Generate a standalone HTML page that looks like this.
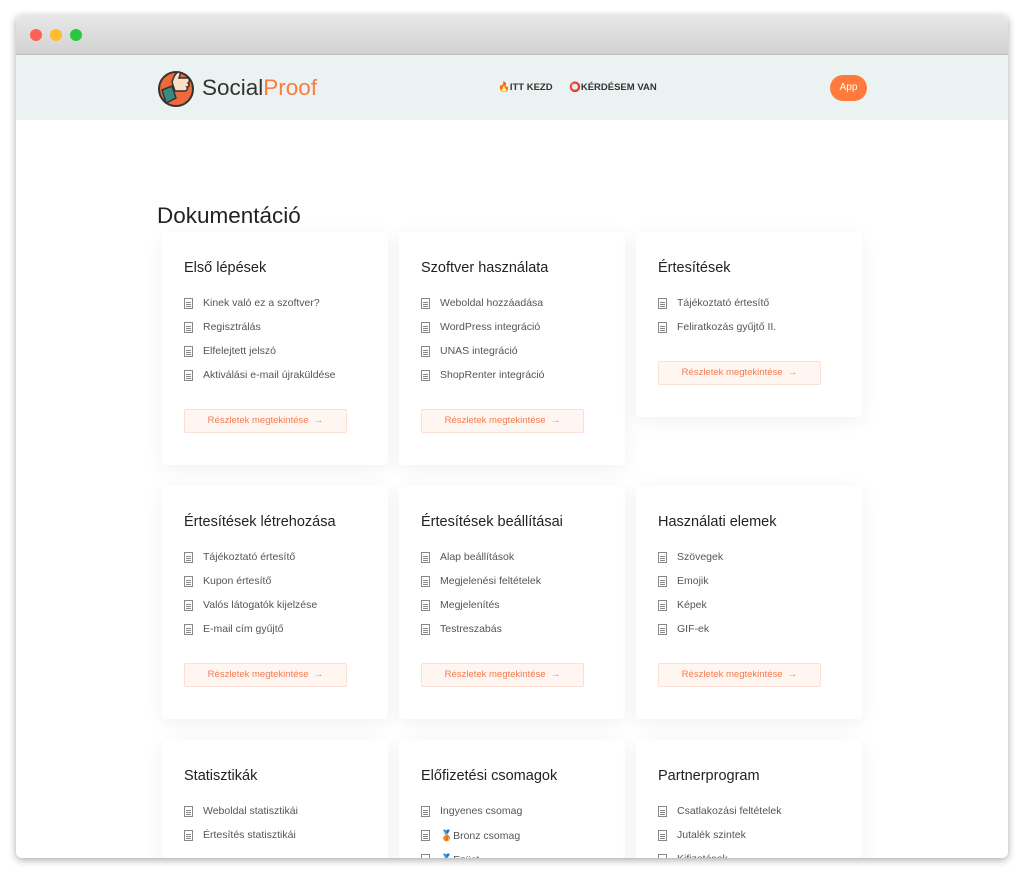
<!DOCTYPE html><html><head><meta charset="utf-8"><style>
*{box-sizing:border-box;margin:0;padding:0}
html,body{width:1024px;height:875px;overflow:hidden}
body{background:#fff;font-family:"Liberation Sans",sans-serif;position:relative}
.win{position:absolute;left:16px;top:15px;width:992px;height:843px;border-radius:6px;overflow:hidden;box-shadow:0 2px 8px rgba(0,0,0,.35);background:#fff}
.tb{height:40px;background:linear-gradient(#e8e8e8,#d2d2d2);border-bottom:1px solid #bdbdbd;position:relative}
.dot{position:absolute;top:14px;width:12px;height:12px;border-radius:50%}
.hd{height:65px;background:#ebf3f2;position:relative}
.logo{position:absolute;left:140px;top:13px;display:flex;align-items:center}
.logo span{font-size:22.5px;color:#333;margin-left:6px}
.nav{position:absolute;top:27px;font-size:9.5px;font-weight:bold;color:#333}
.app{position:absolute;left:814px;top:20px;width:37px;height:26px;border-radius:13px;background:#ff7a3d;color:#fff;font-size:10px;text-align:center;line-height:26px}
h1{position:absolute;left:141px;top:188px;font-size:22.5px;font-weight:normal;color:#222}
.card{position:absolute;width:226px;background:#fff;border-radius:4px;box-shadow:0 4px 20px rgba(0,0,0,.06);padding:28px 22px}
.card h2{font-size:14.5px;font-weight:normal;color:#222;margin-bottom:21px}
.card li{list-style:none;font-size:10.5px;color:#555;height:24px;display:flex;align-items:flex-start}
.ic{width:9px;height:11px;border:1px solid #888;margin-right:10px;margin-top:1px;background:linear-gradient(#888,#888) 1px 3px/5px 1px no-repeat,linear-gradient(#888,#888) 1px 5px/5px 1px no-repeat,linear-gradient(#888,#888) 1px 7px/5px 1px no-repeat}
.btn{margin-top:16px;width:163px;height:24px;border:1px solid #fde0d5;background:#fff6f2;color:#f47a4e;font-size:9.5px;text-align:center;line-height:22px;border-radius:2px}
</style></head><body>
<div class="win">
<div class="tb"><div class="dot" style="left:14px;background:#fe5f57"></div><div class="dot" style="left:34px;background:#febc2e"></div><div class="dot" style="left:54px;background:#28c840"></div></div>
<div class="hd">
<div class="logo"><svg width="40" height="40" viewBox="0 0 40 40"><circle cx="20" cy="21" r="17" fill="#ef6a3a" stroke="#333" stroke-width="2"/><path d="M6 22l10-4 4 12-10 5z" fill="#3a8a80" stroke="#333" stroke-width="1.5"/><path d="M16 14c2-6 4-10 7-10 2 0 1 4 0 6h8c3 0 3 4 1 5 2 1 1 4-1 4 1 1 0 4-2 4h-10z" fill="#fbe0c8" stroke="#333" stroke-width="1.5"/></svg><span>Social<b style="color:#ff7a3d;font-weight:normal">Proof</b></span></div>
<div class="nav" style="left:482px">🔥ITT KEZD</div>
<div class="nav" style="left:553px"><span style="color:#e33">⭕</span>KÉRDÉSEM VAN</div>
<div class="app">App</div>
</div>
<h1>Dokumentáció</h1>
<div class="card" style="left:146px;top:217px;height:233px"><h2>Első lépések</h2><ul><li><i class="ic"></i>Kinek való ez a szoftver?</li><li><i class="ic"></i>Regisztrálás</li><li><i class="ic"></i>Elfelejtett jelszó</li><li><i class="ic"></i>Aktiválási e-mail újraküldése</li></ul><div class="btn">Részletek megtekintése &nbsp;→</div></div>
<div class="card" style="left:383px;top:217px;height:233px"><h2>Szoftver használata</h2><ul><li><i class="ic"></i>Weboldal hozzáadása</li><li><i class="ic"></i>WordPress integráció</li><li><i class="ic"></i>UNAS integráció</li><li><i class="ic"></i>ShopRenter integráció</li></ul><div class="btn">Részletek megtekintése &nbsp;→</div></div>
<div class="card" style="left:620px;top:217px;height:185px"><h2>Értesítések</h2><ul><li><i class="ic"></i>Tájékoztató értesítő</li><li><i class="ic"></i>Feliratkozás gyűjtő II.</li></ul><div class="btn">Részletek megtekintése &nbsp;→</div></div>
<div class="card" style="left:146px;top:471px;height:233px"><h2>Értesítések létrehozása</h2><ul><li><i class="ic"></i>Tájékoztató értesítő</li><li><i class="ic"></i>Kupon értesítő</li><li><i class="ic"></i>Valós látogatók kijelzése</li><li><i class="ic"></i>E-mail cím gyűjtő</li></ul><div class="btn">Részletek megtekintése &nbsp;→</div></div>
<div class="card" style="left:383px;top:471px;height:233px"><h2>Értesítések beállításai</h2><ul><li><i class="ic"></i>Alap beállítások</li><li><i class="ic"></i>Megjelenési feltételek</li><li><i class="ic"></i>Megjelenítés</li><li><i class="ic"></i>Testreszabás</li></ul><div class="btn">Részletek megtekintése &nbsp;→</div></div>
<div class="card" style="left:620px;top:471px;height:233px"><h2>Használati elemek</h2><ul><li><i class="ic"></i>Szövegek</li><li><i class="ic"></i>Emojik</li><li><i class="ic"></i>Képek</li><li><i class="ic"></i>GIF-ek</li></ul><div class="btn">Részletek megtekintése &nbsp;→</div></div>
<div class="card" style="left:146px;top:725px;height:233px"><h2>Statisztikák</h2><ul><li><i class="ic"></i>Weboldal statisztikái</li><li><i class="ic"></i>Értesítés statisztikái</li></ul></div>
<div class="card" style="left:383px;top:725px;height:233px"><h2>Előfizetési csomagok</h2><ul><li><i class="ic"></i>Ingyenes csomag</li><li><i class="ic"></i>🥉Bronz csomag</li><li><i class="ic"></i>🥈Ezüst</li></ul></div>
<div class="card" style="left:620px;top:725px;height:233px"><h2>Partnerprogram</h2><ul><li><i class="ic"></i>Csatlakozási feltételek</li><li><i class="ic"></i>Jutalék szintek</li><li><i class="ic"></i>Kifizetések</li></ul></div>
</div>
</body></html>
